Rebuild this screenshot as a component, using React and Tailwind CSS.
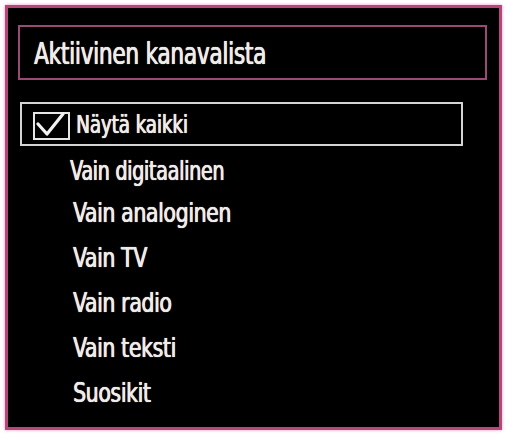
import React from 'react';

const items = [
  { label: 'Vain analoginen' },
  { label: 'Vain TV' },
  { label: 'Vain radio' },
  { label: 'Vain teksti' },
  { label: 'Suosikit' },
];

const font = { fontFamily: '"DejaVu Sans Condensed", "DejaVu Sans", "Liberation Sans", sans-serif' };

export default function App() {
  return (
    <div className="w-[506px] h-[434px] bg-white pt-[5px] pl-[5px] pr-[4px] pb-[4px]" style={font}>
      <div className="h-full bg-black border-[3px] border-[#b8467c] shadow-[0_0_3px_#e890b8] pt-[17px] pl-[10px] pr-[12px] text-[#ececec] [text-shadow:0.6px_0_0_#ececec,0_0_1px_#ffffff]">
        {/* Otsikko */}
        <div className="h-[55px] border-2 border-[#9a4a74] pl-[14px] pt-[12px] text-[30px] leading-[30px] tracking-[-0.3px] whitespace-nowrap">
          <span className="inline-block origin-left scale-x-[0.8]">Aktiivinen kanavalista</span>
        </div>

        {/* Valittu rivi */}
        <div className="mt-[22px] ml-[2px] w-[443px] h-[44px] border-2 border-[#d4d4d4] flex items-center pl-[11px]">
          <div className="relative shrink-0 w-[37px] h-[28px] border-2 border-[#e6e6e6] mt-[4px]">
            <svg className="absolute -left-[2px] -top-[2px]" width="37" height="28" viewBox="0 0 37 28">
              <path d="M5 12 L14 22 L30 2" fill="none" stroke="#f2f2f2" strokeWidth="3.2" strokeLinecap="round" strokeLinejoin="round" />
            </svg>
          </div>
          <span className="ml-[6px] inline-block origin-left scale-x-[0.82] whitespace-nowrap text-[25px] leading-none tracking-[-0.2px]">Näytä kaikki</span>
        </div>

        {/* Lista */}
        <div className="flex flex-col">
          <div className="h-[44px] pl-[52px] pt-[12px] text-[26px] leading-[26px] tracking-[-0.4px] whitespace-nowrap">
            <span className="inline-block origin-left scale-x-[0.82]">Vain digitaalinen</span>
          </div>
          {items.map((item) => (
            <div key={item.label} className="h-[45px] flex items-center pl-[55px] text-[27px] leading-none tracking-[-0.4px] whitespace-nowrap">
              <span className="inline-block origin-left scale-x-[0.84]">{item.label}</span>
            </div>
          ))}
        </div>
      </div>
    </div>
  );
}
